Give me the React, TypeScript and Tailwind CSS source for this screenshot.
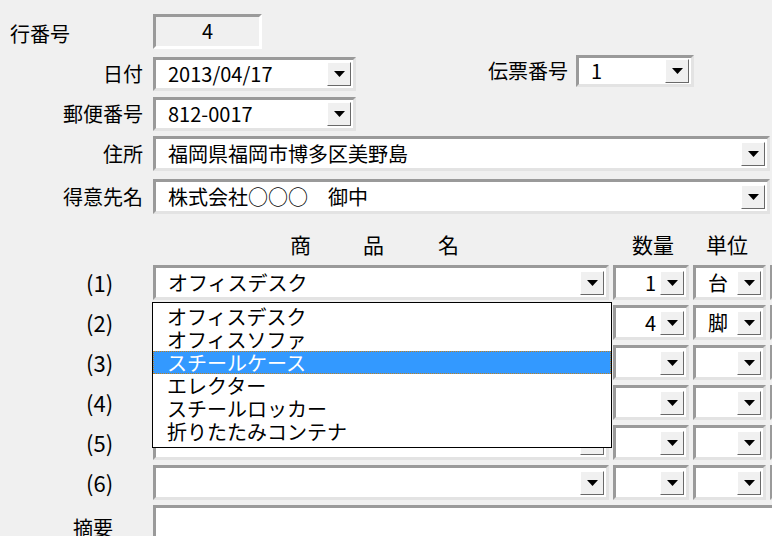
import React from 'react'

const font = { fontFamily: '"Noto Sans CJK JP", "Noto Sans", sans-serif' }

function Arrow() {
  return (
    <div className="w-[24px] h-[24px] shrink-0 bg-[#f0f0f0] border border-t-white border-l-white border-b-[#696969] border-r-[#696969] flex items-center justify-center">
      <svg width="11" height="6" viewBox="0 0 11 6"><path d="M0 0h11L5.5 6z" fill="#000" /></svg>
    </div>
  )
}

function Combo({ w, text = '', right = false, h = 35, arrow = true }: { w: number; text?: string; right?: boolean; h?: number; arrow?: boolean }) {
  return (
    <div
      className="shrink-0 flex items-center bg-white border-[3px] border-t-[#9a9a9a] border-l-[#9a9a9a] border-b-[#e3e3e3] border-r-[#e3e3e3] pr-[2px]"
      style={{ width: w, height: h }}
    >
      <div className={`flex-1 px-[12px] text-[20px] leading-[26px] whitespace-nowrap overflow-hidden ${right ? 'text-right pr-[4px]' : ''}`}>{text}</div>
      {arrow && <Arrow />}
    </div>
  )
}

function Label({ children }: { children: React.ReactNode }) {
  return <div className="w-[145px] shrink-0 text-right text-[20px] pr-[2px]">{children}</div>
}

const items = ['オフィスデスク', 'オフィスソファ', 'スチールケース', 'エレクター', 'スチールロッカー', '折りたたみコンテナ']
const rows = [
  { p: 'オフィスデスク', q: '1', u: '台' },
  { p: '', q: '4', u: '脚' },
  { p: '', q: '', u: '' },
  { p: '', q: '', u: '' },
  { p: '', q: '', u: '' },
  { p: '', q: '', u: '' },
]

export default function App() {
  return (
    <div className="w-[772px] h-[536px] overflow-hidden bg-[#f0f0f0] text-black relative" style={font}>
      <div className="flex items-center mt-[13px] gap-[8px]">
        <div className="w-[145px] pl-[10px] text-[20px] mt-[6px]">行番号</div>
        <div className="w-[109px] h-[35px] bg-[#f0f0f0] border-[3px] border-t-[#9a9a9a] border-l-[#9a9a9a] border-b-white border-r-white text-[20px] flex items-center justify-center">4</div>
      </div>
      <div className="flex items-center mt-[8px] gap-[8px]">
        <Label>日付</Label>
        <Combo w={203} text="2013/04/17" h={34} />
        <div className="ml-[124px] text-[20px] -mt-[6px]">伝票番号</div>
        <div className="-mt-[6px]"><Combo w={118} text="1" h={32} /></div>
      </div>
      <div className="flex items-center mt-[6px] gap-[8px]">
        <Label>郵便番号</Label>
        <Combo w={203} text="812-0017" h={34} />
      </div>
      <div className="flex items-center mt-[5px] gap-[8px]">
        <Label>住所</Label>
        <Combo w={617} text="福岡県福岡市博多区美野島" />
      </div>
      <div className="flex items-center mt-[8px] gap-[8px]">
        <Label>得意先名</Label>
        <Combo w={617} text="株式会社○○○　御中" />
      </div>
      <div className="flex items-end mt-[16px] h-[30px] text-[21px]">
        <div className="w-[290px]" />
        <div className="w-[73px]">商</div>
        <div className="w-[75px]">品</div>
        <div className="w-[194px]">名</div>
        <div className="w-[74px]">数量</div>
        <div>単位</div>
      </div>
      <div className="relative mt-[5px]">
        {rows.map((r, i) => (
          <div key={i} className="flex items-center h-[35px] mb-[5px]">
            <div className="w-[153px] shrink-0 pl-[86px] text-[22px]">({i + 1})</div>
            <Combo w={456} text={r.p} />
            <div className="ml-[4px]"><Combo w={76} text={r.q} right /></div>
            <div className="ml-[4px]"><Combo w={73} text={r.u} /></div>
            <div className="ml-[4px]"><Combo w={20} arrow={false} /></div>
          </div>
        ))}
        <div className="absolute left-[152px] top-[37px] w-[460px] h-[146px] bg-white border border-black pt-[2px]">
          {items.map((t, i) => (
            <div
              key={t}
              className={`h-[23px] leading-[23px] pl-[14px] text-[20px] ${i === 2 ? 'bg-[#3399ff] text-white outline-1 outline-dotted outline-[#c08020] -outline-offset-1' : ''}`}
            >
              {t}
            </div>
          ))}
        </div>
      </div>
      <div className="flex items-start mt-[2px]">
        <div className="w-[153px] shrink-0 pl-[73px] text-[20px] mt-[8px]">摘要</div>
        <div className="flex-1 h-[40px] bg-white border-[3px] border-t-[#9a9a9a] border-l-[#9a9a9a] border-r-0 border-b-0" />
      </div>
    </div>
  )
}
